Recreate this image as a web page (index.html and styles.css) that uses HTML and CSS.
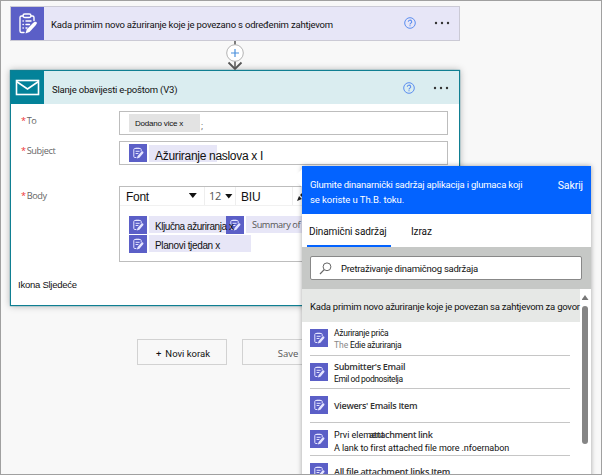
FILE: index.html
```html
<!DOCTYPE html>
<html lang="hr">
<head>
    <meta charset="UTF-8">
    <meta name="viewport" content="width=device-width, initial-scale=1.0">
    <title>Slanje obavijesti e-poštom</title>
    <link rel="stylesheet" href="styles.css">
</head>
<body>
    <svg class="symbols" width="0" height="0">
        <symbol id="clipboard" viewBox="0 0 33 33">
            <g fill="none" stroke="currentColor" stroke-width="1.4" stroke-linecap="round" stroke-linejoin="round">
                <path d="M12 9h-1.500a1.500 1.500 0 0 0-1.500 1.500v13.500a1.500 1.500 0 0 0 1.500 1.500H13M20 9h1.500a1.500 1.500 0 0 1 1.500 1.500v3"/>
                <rect x="12" y="7" width="8" height="3.500" rx="1.700"/>
                <path d="M12 14h.3M15 14h5M12 17.500h.3M15 17.500h3.500M12 21h.3M15 21h1"/>
            </g>
            <path fill="currentColor" d="M22 16l1.700-1.200a1.500 1.500 0 0 1 2 2L24.500 18.500 18.500 25l-4 1.500 1.200-4z"/>
        </symbol>
        <symbol id="clipboard-small" viewBox="0 0 18 18">
            <path d="M7 13.500H5.800a1 1 0 0 1-1-1v-7a1 1 0 0 1 1-1h5.400a1 1 0 0 1 1 1V7M7 4.200h3M7 7.300h3.200M7 9.500h2" fill="none" stroke="currentColor" stroke-linecap="round"/>
            <path fill="currentColor" d="M12.300 7.800a1.200 1.200 0 0 1 1.900 1.500l-3.800 4.400-2.600.9.800-2.600z"/>
        </symbol>
        <symbol id="help" viewBox="0 0 12 12">
            <g fill="none" stroke="currentColor">
                <circle cx="6" cy="6" r="5.300"/>
                <path d="M4.300 4.800a1.700 1.600 0 1 1 2.600 1.300C6.200 6.500 6 6.700 6 7.400M6 8.200v1" stroke-width="1.100"/>
            </g>
        </symbol>
        <symbol id="dots" viewBox="0 0 16 4">
            <g fill="#333"><circle cx="2" cy="2" r="1.200"/><circle cx="8" cy="2" r="1.200"/><circle cx="14" cy="2" r="1.200"/></g>
        </symbol>
    </svg>

    <div class="page">
        <div class="card trigger">
            <div class="card-icon"><svg width="33" height="33"><use href="#clipboard"/></svg></div>
            <div class="card-title">Kada primim novo ažuriranje koje je povezano s određenim zahtjevom</div>
            <svg class="help" width="12" height="12"><use href="#help"/></svg>
            <svg class="dots" width="16" height="4"><use href="#dots"/></svg>
        </div>

        <div class="connector">
            <svg width="20" height="30" viewBox="0 0 20 30">
                <path d="M10 0v28" stroke="#555" stroke-width="1.500"/>
                <path d="M3.500 21.500L10 28l6.500-6.500" fill="none" stroke="#555" stroke-width="1.800"/>
                <circle cx="10" cy="12" r="8.300" fill="#fff" stroke="#b4b4b4"/>
                <path d="M6 12h8M10 8v8" stroke="#4a90dc" stroke-width="1.200"/>
            </svg>
        </div>

        <div class="card action">
            <div class="action-head">
                <div class="card-icon"><svg width="33" height="33" viewBox="0 0 33 33"><rect x="5.500" y="9.500" width="22" height="14" fill="none" stroke="#fff" stroke-width="1.600"/><path d="M5.500 10.500l11 7.500 11-7.500" fill="none" stroke="#fff" stroke-width="1.600"/></svg></div>
                <div class="card-title">Slanje obavijesti e-poštom (V3)</div>
                <svg class="help" width="12" height="12"><use href="#help"/></svg>
                <svg class="dots" width="16" height="4"><use href="#dots"/></svg>
            </div>
            <div class="field">
                <label><i>*</i>To</label>
                <div class="input"><span class="pill">Dodano vice x</span><span class="semi">;</span></div>
            </div>
            <div class="field subject">
                <label><i>*</i>Subject</label>
                <div class="input">
                    <span class="token-icon"><svg width="18" height="18"><use href="#clipboard-small"/></svg></span>
                    <span class="token token-subject">Ažuriranje naslova x I</span>
                </div>
            </div>
            <div class="field body">
                <label><i>*</i>Body</label>
                <div class="input editor">
                    <div class="toolbar">
                        <span class="tool font">Font<b class="caret"></b></span>
                        <span class="tool size">12<b class="caret"></b></span>
                        <span class="tool biu">BIU</span>
                        <span class="tool pen"><svg width="12" height="12" viewBox="0 0 12 12"><path d="M1 11l2-5 3 3zM4 5l5-5 3 3-5 5z" fill="#222"/></svg></span>
                    </div>
                    <div class="tokens">
                        <span class="token-icon"><svg width="18" height="18"><use href="#clipboard-small"/></svg></span>
                        <span class="token token-key">Ključna ažuriranja x</span>
                        <span class="token-icon"><svg width="18" height="18"><use href="#clipboard-small"/></svg></span>
                        <span class="token token-summary">Summary of</span>
                    </div>
                    <div class="tokens">
                        <span class="token-icon"><svg width="18" height="18"><use href="#clipboard-small"/></svg></span>
                        <span class="token token-plan">Planovi tjedan x</span>
                    </div>
                </div>
            </div>
            <div class="next">Ikona Sljedeće</div>
        </div>

        <div class="buttons">
            <div class="button"><em>+</em><span>Novi korak</span></div>
            <div class="button save">Save</div>
        </div>

        <div class="panel">
            <div class="panel-head">
                <p><span class="line1">Glumite dinanarnički sadržaj aplikacija i glumaca koji</span><br><span>se koriste u Th.B. toku.</span></p>
                <span class="hide">Sakrij</span>
            </div>
            <div class="tabs">
                <span class="tab active">Dinamični sadržaj</span>
                <span class="tab second">Izraz</span>
            </div>
            <div class="search">
                <div class="search-box">
                    <svg width="13" height="13" viewBox="0 0 13 13"><circle cx="8" cy="4.800" r="3.900" fill="none" stroke="#666"/><path d="M5.200 7.600L1 12" stroke="#666" stroke-width="1.200"/></svg>
                    <span>Pretraživanje dinamičnog sadržaja</span>
                </div>
            </div>
            <div class="list">
                <div class="group"><span>Kada primim novo ažuriranje koje je povezan sa zahtjevom za govor</span></div>
                <div class="item">
                    <span class="token-icon"><svg width="18" height="18"><use href="#clipboard-small"/></svg></span>
                    <div class="item-text"><div class="name">Ažuriranje priča</div><div class="desc"><span class="the">The</span> <span>Edie ažuriranja</span></div></div>
                </div>
                <div class="item">
                    <span class="token-icon"><svg width="18" height="18"><use href="#clipboard-small"/></svg></span>
                    <div class="item-text"><div class="name strong">Submitter's Email</div><div class="desc sender">Emil od podnositelja</div></div>
                </div>
                <div class="item">
                    <span class="token-icon"><svg width="18" height="18"><use href="#clipboard-small"/></svg></span>
                    <div class="item-text single"><div class="name strong">Viewers' Emails Item</div></div>
                </div>
                <div class="item">
                    <span class="token-icon"><svg width="18" height="18"><use href="#clipboard-small"/></svg></span>
                    <div class="item-text attachment"><div class="name"><span class="first">Prvi element</span><span class="strong link">attachment link</span></div><div class="desc">A lank to first attached file more .nfoernabon</div></div>
                </div>
                <div class="item">
                    <span class="token-icon"><svg width="18" height="18"><use href="#clipboard-small"/></svg></span>
                    <div class="item-text single last"><div class="name strong">All file attachment links Item</div></div>
                </div>
                <div class="scrollbar"><b class="up"></b><b class="thumb"></b></div>
            </div>
        </div>
    </div>
</body>
</html>
```
FILE: styles.css
```css
* {
    box-sizing: border-box;
}

body {
    margin: 0;
    font-family: Roboto, "Liberation Sans", sans-serif;
    font-size: 9.5px;
    color: #111;
    background-color: #f8f8f8;
}

span, label {
    white-space: nowrap;
}

svg {
    display: block;
    flex-shrink: 0;
}

.symbols {
    position: absolute;
}

.page {
    position: relative;
    width: 602px;
    height: 475px;
    padding: 5px 0 0 9px;
    border: 1px solid #a0a0a0;
    overflow: hidden;
}

/* flow cards */
.card {
    width: 450px;
}

.trigger {
    display: flex;
    align-items: center;
    height: 35px;
    background-color: #e7e6f7;
    border: 1px solid #cbcad5;
}

.card-icon {
    width: 33px;
    height: 33px;
    background-color: #5b5fc7;
    color: #fff;
}

.card-title {
    flex: 1;
    padding: 2px 0 0 7px;
    white-space: nowrap;
    letter-spacing: -0.19px;
}

.action .card-title {
    padding: 4px 0 0 8px;
}

.help {
    color: #5b8def;
    margin: -2px 18px 0 0;
}

.dots {
    margin: -2px 9px 0 0;
}

.action .help, .action .dots {
    margin-top: 1px;
}

.connector {
    height: 29px;
    padding-left: 215px;
}

.action {
    height: 236px;
    background-color: #fff;
    border: 1px solid #0f7f92;
    box-shadow: 0 0 1px #0f7f92, 0 0 7px rgba(0, 0, 0, 0.28);
}

.action-head {
    display: flex;
    align-items: center;
    height: 33px;
    background-color: #daedf0;
}

.action-head .card-icon {
    background-color: #038299;
}

.action-head .dots {
    margin-right: 10px;
}

/* fields */
.field {
    display: flex;
    margin-top: 7px;
}

.field.subject {
    margin-top: 6px;
}

.field.body {
    margin-top: 21px;
}

label {
    width: 108px;
    padding: 3px 0 0 10px;
    font-family: "Open Sans", sans-serif;
    font-size: 9.2px;
    line-height: 14px;
    letter-spacing: -0.4px;
    color: #666;
}

label i {
    font-style: normal;
    color: #e33;
    margin-right: 1px;
}

.input {
    display: flex;
    align-items: center;
    width: 329px;
    height: 24px;
    padding-left: 9px;
    border: 1px solid #bdbdbd;
    background-color: #fff;
}

.pill {
    width: 71px;
    height: 18px;
    padding-left: 6px;
    line-height: 20px;
    font-family: "Liberation Sans", sans-serif;
    font-size: 8px;
    letter-spacing: -0.2px;
    background-color: #e3e3e3;
}

.semi {
    margin: 4px 0 0 1px;
    color: #777;
}

.token-icon {
    width: 18px;
    height: 18px;
    flex-shrink: 0;
    background-color: #5b5fc7;
    color: #e4e4ff;
}

.token {
    height: 17px;
    margin-left: 2px;
    padding-left: 6px;
    font-family: "Liberation Sans", sans-serif;
    background-color: #e7e6f7;
}

.token-subject {
    width: 68px;
    line-height: 22px;
    font-size: 12px;
    letter-spacing: -0.3px;
}

.editor {
    display: block;
    height: 76px;
    padding: 0;
}

.toolbar {
    display: flex;
    height: 19px;
    margin-bottom: 10px;
    border-bottom: 1px solid #f1f1f1;
}

.tool {
    display: flex;
    align-items: center;
    font-family: "Liberation Sans", sans-serif;
    font-size: 12px;
    line-height: 20px;
    border-right: 1px solid #eee;
}

.caret {
    width: 8px;
    height: 5px;
    background-color: #111;
    clip-path: polygon(0 0, 100% 0, 50% 100%);
}

.tool.font {
    width: 85px;
    padding: 2px 0 0 6px;
    letter-spacing: -0.3px;
}

.font .caret {
    margin: -3px 0 0 40px;
}

.tool.size {
    width: 31px;
    padding-left: 4px;
    font-family: "Open Sans", sans-serif;
    font-size: 11px;
    letter-spacing: -0.4px;
    color: #555;
}

.size .caret {
    margin-left: 4px;
}

.tool.biu {
    width: 57px;
    padding: 2px 0 0 5px;
    letter-spacing: -0.2px;
}

.tool.pen {
    padding-left: 3px;
    border: 0;
}

.tokens {
    display: flex;
    height: 19px;
    padding-left: 9px;
}

.token-key {
    width: 77px;
    position: relative;
    z-index: 1;
    line-height: 21px;
    font-size: 10px;
    letter-spacing: -0.44px;
}

.token-summary {
    width: 90px;
    font-family: "Open Sans", sans-serif;
    font-size: 9.2px;
    line-height: 18px;
    letter-spacing: -0.4px;
    color: #555;
}

.token-plan {
    width: 102px;
    font-size: 10px;
    line-height: 21px;
    letter-spacing: -0.36px;
}

.next {
    padding: 17px 0 0 7px;
    font-family: "Liberation Sans", sans-serif;
    line-height: 12px;
    letter-spacing: -0.25px;
}

.buttons {
    display: flex;
    gap: 15px;
    padding: 33px 0 0 127px;
}

.button {
    display: flex;
    align-items: center;
    justify-content: center;
    gap: 4px;
    width: 90px;
    height: 26px;
    border: 1px solid #d2d2d2;
    padding: 2px 0 0 2px;
}

.button em {
    font-style: normal;
}

.save {
    font-family: "Open Sans", sans-serif;
    color: #555;
}

/* dynamic content popup */
.panel {
    position: absolute;
    left: 301px;
    top: 165px;
    width: 289px;
    height: 320px;
    background-color: #fff;
    box-shadow: 0 0 5px rgba(0, 0, 0, 0.35);
}

.panel::before {
    content: "";
    position: absolute;
    left: -9px;
    top: 3px;
    width: 9px;
    height: 18px;
    background-color: #fff;
    clip-path: polygon(100% 0, 100% 100%, 0 50%);
}

.panel-head {
    display: flex;
    justify-content: space-between;
    height: 48px;
    padding: 11px 8px 0 8px;
    color: #fff;
    background-color: #0363ff;
}

.panel-head p {
    margin: 0;
    line-height: 15px;
    letter-spacing: -0.08px;
}

.panel-head .line1 {
    letter-spacing: -0.19px;
}

.hide {
    font-size: 10.5px;
    line-height: 18px;
    letter-spacing: -0.1px;
}

.tabs {
    display: flex;
    height: 33px;
    padding-left: 5px;
}

.tab {
    font-size: 10px;
    line-height: 36px;
    letter-spacing: -0.1px;
}

.tab.active {
    width: 84px;
    padding-left: 2px;
    border-bottom: 2px solid #0363ff;
}

.tab.second {
    margin-left: 20px;
}

.search {
    height: 42px;
    padding: 9px 9px 0 8px;
    background-color: #c6c8c6;
}

.search-box {
    display: flex;
    align-items: center;
    gap: 9px;
    height: 24px;
    padding: 1px 0 0 8px;
    border: 1px solid #888;
    border-radius: 2px;
    background-color: #fff;
    letter-spacing: -0.25px;
}

.list {
    position: relative;
}

.group {
    width: 278px;
    height: 33px;
    padding-left: 8px;
    line-height: 36px;
    letter-spacing: -0.23px;
    background-color: #e6e8e6;
}

.item {
    display: flex;
    gap: 6px;
    width: 260px;
    height: 33.6px;
    margin-left: 8px;
    padding-top: 7px;
    border-bottom: 1px solid #c6c6c6;
}

.item-text {
    flex: 1;
    min-width: 0;
    white-space: nowrap;
    line-height: 12px;
    margin-top: -2px;
}

.name, .desc {
    font-size: 8.5px;
    letter-spacing: -0.28px;
}

.desc.sender {
    letter-spacing: -0.4px;
}

.strong {
    font-family: "Open Sans", sans-serif;
    font-size: 9px;
    font-weight: 600;
    letter-spacing: -0.3px;
    color: #333;
}

.the {
    color: #888;
    letter-spacing: 0;
}

.item-text.single {
    margin-top: 4px;
}

.item-text.last {
    margin-top: 3px;
}

.attachment .name {
    height: 14px;
    font-size: 9px;
    letter-spacing: 0;
}

.attachment .desc {
    font-size: 9px;
    letter-spacing: -0.08px;
}

.first {
    display: inline-block;
    width: 49px;
    padding-top: 1px;
}

.link {
    margin-left: -14px;
    letter-spacing: -0.37px;
}

.scrollbar {
    position: absolute;
    right: 2px;
    top: 6px;
    width: 8px;
    display: flex;
    flex-direction: column;
    align-items: center;
}

.up {
    width: 7px;
    height: 5px;
    background-color: #777;
    clip-path: polygon(50% 0, 100% 100%, 0 100%);
}

.thumb {
    width: 6px;
    height: 138px;
    margin-top: 6px;
    border-radius: 3px;
    background-color: #858585;
}
```
